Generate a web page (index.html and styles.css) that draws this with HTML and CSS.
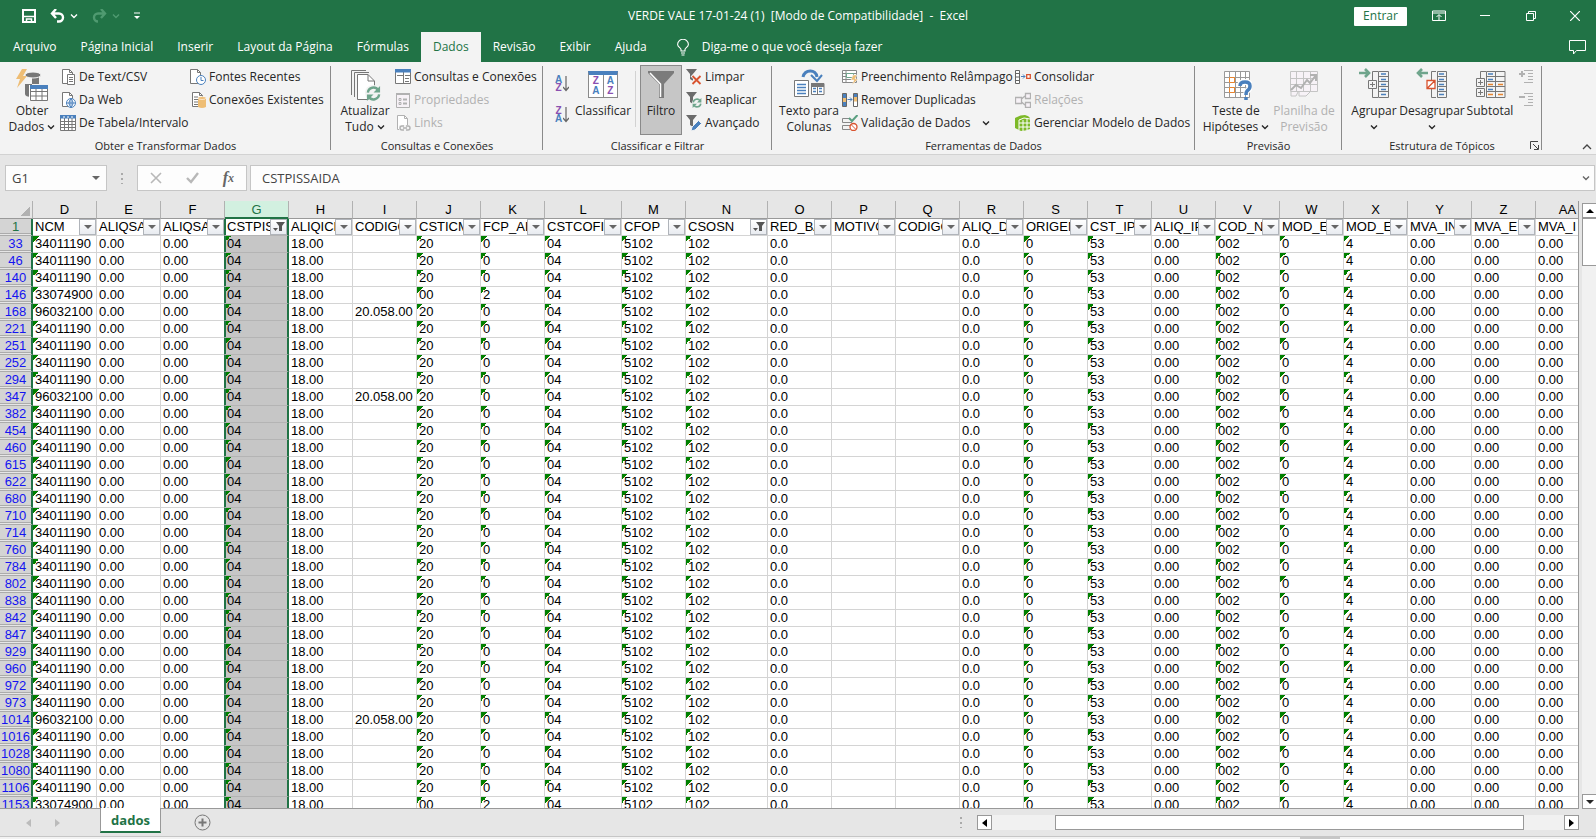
FILE: index.html
```html
<!DOCTYPE html>
<html lang="pt-BR">
<head>
  <meta charset="UTF-8">
  <meta name="viewport" content="width=device-width, initial-scale=1.0">
  <title>VERDE VALE 17-01-24 (1) - Excel</title>
  <link rel="stylesheet" href="styles.css">
</head>
<body>

  <!-- shared icons -->
  <svg class="defs" width="0" height="0">
    <symbol id="chev" viewBox="0 0 8 8"><path d="M1 2.5L4 5.5L7 2.5" fill="none" stroke="currentColor" stroke-width="1.4"/></symbol>
    <symbol id="down" viewBox="0 0 8 8"><path d="M0 2H8L4 6Z" fill="currentColor"/></symbol>
    <symbol id="page" viewBox="0 0 16 16"><path d="M2.500 .5H9.500L12.500 3.500V14.500H2.500Z" fill="#fff" stroke="currentColor"/><path d="M9.500 .5V3.500H12.500" fill="none" stroke="currentColor"/></symbol>
    <symbol id="funnel" viewBox="0 0 16 16"><path d="M0 0H11L7 5V12L4 10V5Z" fill="#6b6b6b"/></symbol>
    <symbol id="recycle" viewBox="0 0 16 16"><path d="M2 7A6 6 0 0 1 13 4.500M14 9A6 6 0 0 1 3 11.500" fill="none" stroke="#6fa58c" stroke-width="2.600"/><path d="M15 0V7H8ZM1 16V9H8Z" fill="#6fa58c"/></symbol>
  </svg>

  <header class="titlebar">
    <div class="quick">
      <button class="qbtn" aria-label="Salvar"><svg width="14" height="14" viewBox="0 0 14 14"><path d="M1 1H13V13H1Z" fill="none" stroke="#fff" stroke-width="2"/><path d="M1 7.500H13M4.500 13V10H9.500V13" fill="none" stroke="#fff" stroke-width="1.500"/></svg></button>
      <button class="qbtn undo" aria-label="Desfazer"><svg width="15" height="14" viewBox="0 0 15 14"><path d="M6 0L2 4.500L6 9M2 4.500H9A4 4 0 0 1 9 12.500H7" fill="none" stroke="currentColor" stroke-width="2.400"/></svg><svg width="8" height="8"><use href="#chev"/></svg></button>
      <button class="qbtn undo dim" aria-label="Refazer"><svg width="15" height="14" viewBox="0 0 15 14"><path d="M9 0L13 4.500L9 9M13 4.500H6A4 4 0 0 0 6 12.500H5" fill="none" stroke="currentColor" stroke-width="2.400"/></svg><svg width="8" height="8"><use href="#chev"/></svg></button>
      <button class="qbtn" aria-label="Personalizar"><svg width="6" height="8" viewBox="0 0 6 8"><path d="M0 1H6" stroke="#fff"/><path d="M0 4H6L3 7Z" fill="#fff"/></svg></button>
    </div>
    <h1 class="doc">VERDE VALE 17-01-24 (1)&nbsp; [Modo de Compatibilidade]&nbsp; -&nbsp; Excel</h1>
    <div class="window">
      <button class="signin">Entrar</button>
      <button class="wbtn" aria-label="Faixa de opções"><svg width="14" height="12" viewBox="0 0 14 12"><path d="M.5 1H13.500V10.500H.5ZM.5 3H13.500M7 10V5M4.500 7L7 4.500L9.500 7" fill="none" stroke="#fff"/></svg></button>
      <button class="wbtn" aria-label="Minimizar"><svg width="10" height="10" viewBox="0 0 10 10"><path d="M0 4.500H10" stroke="#fff"/></svg></button>
      <button class="wbtn" aria-label="Restaurar"><svg width="10" height="10" viewBox="0 0 10 10"><path d="M.5 2.500H7.500V9.500H.5ZM2.500 2.500V.5H9.500V7.500H7.500" fill="none" stroke="#fff"/></svg></button>
      <button class="wbtn" aria-label="Fechar"><svg width="10" height="10" viewBox="0 0 10 10"><path d="M0 0L10 10M10 0L0 10" stroke="#fff" stroke-width="1.200"/></svg></button>
    </div>
  </header>

  <nav class="tabs">
    <a href="#" class="tab">Arquivo</a>
    <a href="#" class="tab">Página Inicial</a>
    <a href="#" class="tab">Inserir</a>
    <a href="#" class="tab">Layout da Página</a>
    <a href="#" class="tab">Fórmulas</a>
    <a href="#" class="tab active">Dados</a>
    <a href="#" class="tab">Revisão</a>
    <a href="#" class="tab">Exibir</a>
    <a href="#" class="tab">Ajuda</a>
    <button class="tell"><svg width="12" height="17" viewBox="0 0 12 17"><path d="M4 12V10.500C4 9 .6 8 .6 5.500A5.200 5 0 0 1 11.400 5.500C11.400 8 8 9 8 10.500V12ZM4 14H8M4.500 16H7.500" fill="none" stroke="#fff" stroke-width="1.100"/></svg>Diga-me o que você deseja fazer</button>
    <button class="comment" aria-label="Comentários"><svg width="17" height="15" viewBox="0 0 17 15"><path d="M.5 .5H16.500V10.500H7.500L4.500 14V10.500H.5Z" fill="none" stroke="#fff"/></svg></button>
  </nav>

  <main class="ribbon">
    <section class="group">
      <div class="tools">
        <button class="big w52">
          <svg width="32" height="34" viewBox="0 0 32 34"><path d="M9 8V26Q9 29 16 29V8Z M9 7H23V16H9Z" fill="#777"/><ellipse cx="17" cy="7" rx="8" ry="3" fill="#777" stroke="#f3f3f3"/><path d="M6 1H11L7 8H11L1 20L4 11H0Z" fill="#eebd74"/><rect x="13" y="17" width="19" height="16" fill="#fff"/><path d="M14.500 18.500H31.500V32.500H14.500ZM14 23.500H32M14 28H32M20 19V32M26 19V32" fill="none" stroke="#777"/><path d="M14 17H32V21H14Z" fill="#4a80bd"/></svg>
          <span>Obter<br>Dados <svg width="8" height="8"><use href="#chev"/></svg></span>
        </button>
        <div class="col w128">
          <button class="small"><svg width="16" height="16" viewBox="0 0 16 16"><use href="#page"/><path d="M7.500 5.500H14.500V15.500H7.500Z" fill="#fff" stroke="#777"/><path d="M9 8.500H13M9 10.500H13M9 12.500H13" stroke="#777"/></svg>De Text/CSV</button>
          <button class="small"><svg width="16" height="16" viewBox="0 0 16 16"><use href="#page"/><circle cx="11" cy="11" r="4.500" fill="#fff" stroke="#4a80bd"/><path d="M6.500 11H15.500M11 6.500V15.500M11 6.500Q7 11 11 15.500Q15 11 11 6.500" fill="none" stroke="#4a80bd"/></svg>Da Web</button>
          <button class="small"><svg width="16" height="16" viewBox="0 0 16 16"><path d="M.5 .5H15.500V15.500H.5ZM0 6.500H16M0 9.500H16M0 12.500H16M4.500 3V16M8.500 3V16M12 3V16" fill="#fff" stroke="#777"/><path d="M0 0H16V3.500H0Z" fill="#4a80bd"/><path d="M3 2H5M7 2H9M11 2H13" stroke="#fff"/></svg>De Tabela/Intervalo</button>
        </div>
        <div class="col">
          <button class="small"><svg width="16" height="16" viewBox="0 0 16 16"><use href="#page" x="-2"/><circle cx="11" cy="11" r="4.500" fill="#fff" stroke="#4a80bd"/><path d="M11 8V11.500H13.500" fill="none" stroke="#4a80bd"/></svg>Fontes Recentes</button>
          <button class="small"><svg width="16" height="16" viewBox="0 0 16 16"><use href="#page"/><path d="M4 5H8M4 7.500H8M4 10H8M4 12.500H8" stroke="#777"/><path d="M8 5H16V15Q12 17 8 15Z" fill="#eebd74"/><ellipse cx="12" cy="6" rx="4" ry="1.500" fill="#eebd74" stroke="#fff" stroke-width=".6"/></svg>Conexões Existentes</button>
        </div>
      </div>
      <h2 class="caption">Obter e Transformar Dados</h2>
    </section>

    <section class="group">
      <div class="tools">
        <button class="big w56">
          <svg width="32" height="34" viewBox="0 0 32 34"><path d="M2.500 27V2.500H17M5.500 29V4.500H20" fill="none" stroke="#777"/><path d="M8.500 6.500H19L25.500 13V31.500H8.500Z" fill="#fff" stroke="#777"/><path d="M19 6.500V13H25" fill="none" stroke="#777"/><circle cx="24" cy="25" r="8" fill="#f3f3f3"/><use href="#recycle" x="17" y="18" width="15" height="15"/></svg>
          <span>Atualizar<br>Tudo <svg width="8" height="8"><use href="#chev"/></svg></span>
        </button>
        <div class="col">
          <button class="small"><svg width="16" height="16" viewBox="0 0 16 16"><path d="M.5 .5H15.500V14.500H.5ZM10 6.500H15M10 9.500H14M10 12.500H14M8.500 3V15M2 6.500H8" fill="#fff" stroke="#777"/><path d="M0 0H16V3.500H0Z" fill="#4a80bd"/></svg>Consultas e Conexões</button>
          <button class="small" disabled><svg width="16" height="16" viewBox="0 0 16 16"><path d="M1.500 1.500H14.500V15.500H1.500Z" fill="#f7f2f7" stroke="#b1b1b1"/><path d="M1 2H15M8 7.500H12M8 11.500H12" stroke="#b1b1b1" stroke-width="2"/><path d="M4 6.500H6V8.500H4ZM4 10.500H6V12.500H4Z" fill="none" stroke="#b1b1b1"/></svg>Propriedades</button>
          <button class="small" disabled><svg width="16" height="16" viewBox="0 0 16 16"><use href="#page"/><path d="M4 10H16V16H4Z" fill="#f3f3f3"/><path d="M9 11H7A2 2 0 0 0 7 15H9M11 11H13A2 2 0 0 1 13 15H11M8 13H12" fill="none" stroke="#b1b1b1" stroke-width="1.400"/></svg>Links</button>
        </div>
      </div>
      <h2 class="caption">Consultas e Conexões</h2>
    </section>

    <section class="group">
      <div class="tools">
        <div class="sorts">
          <button class="sort" aria-label="Classificar de A a Z"><span><b class="a">A</b><b class="z">Z</b></span><svg width="6" height="16" viewBox="0 0 6 16"><path d="M3 0V14M0 11L3 14.500L6 11" fill="none" stroke="#666" stroke-width="1.200"/></svg></button>
          <button class="sort" aria-label="Classificar de Z a A"><span><b class="z">Z</b><b class="a">A</b></span><svg width="6" height="16" viewBox="0 0 6 16"><path d="M3 0V14M0 11L3 14.500L6 11" fill="none" stroke="#666" stroke-width="1.200"/></svg></button>
        </div>
        <button class="big w60">
          <span class="azbox"><span><b class="z">Z</b><b class="a">A</b></span><span><b class="a">A</b><b class="z">Z</b></span></span>
          <span>Classificar</span>
        </button>
        <button class="big filter">
          <svg width="32" height="34" viewBox="0 0 32 34"><path d="M3 3H29V5L19 16V30H14V16L3 5Z" fill="#7b7b7b"/><path d="M5 5L15.500 16V29" fill="none" stroke="#fff" stroke-width="1.500"/></svg>
          <span>Filtro</span>
        </button>
        <div class="col">
          <button class="small"><svg width="16" height="16" viewBox="0 0 16 16"><use href="#funnel"/><path d="M6 6L15 15M15 6L6 15" stroke="#f3f3f3" stroke-width="4"/><path d="M6.500 7L14.500 15M14.500 7L6.500 15" stroke="#d9532f" stroke-width="1.800"/></svg>Limpar</button>
          <button class="small"><svg width="16" height="16" viewBox="0 0 16 16"><use href="#funnel"/><circle cx="11" cy="11" r="5" fill="#f3f3f3"/><use href="#recycle" x="6" y="6" width="10" height="10"/></svg>Reaplicar</button>
          <button class="small"><svg width="16" height="16" viewBox="0 0 16 16"><use href="#funnel"/><path d="M5 16L6 12L12.500 5.500L15.500 8.500L9 15Z" fill="#4a80bd" stroke="#f3f3f3"/></svg>Avançado</button>
        </div>
      </div>
      <h2 class="caption">Classificar e Filtrar</h2>
    </section>

    <section class="group">
      <div class="tools">
        <button class="big w62">
          <svg width="32" height="34" viewBox="0 0 32 34"><path d="M10 9C12 1 23 1 24 9" fill="none" stroke="#4a80bd" stroke-width="3"/><path d="M18 7L24 13L29 7" fill="none" stroke="#4a80bd" stroke-width="2"/><path d="M1.500 12.500H15.500V28.500H1.500ZM18.500 15.500H31V26.500H18.500ZM24.500 17V26M18 18.500H31" fill="#fff" stroke="#777"/><path d="M18 16.500H31" stroke="#777" stroke-width="3"/><path d="M4 16.500H13M4 19.500H13M4 22.500H13M4 25.500H13M20 20.500H23M20 23.500H23M26 20.500H29M26 23.500H29" stroke="#4a80bd" stroke-width="1.300"/></svg>
          <span>Texto para<br>Colunas</span>
        </button>
        <div class="col w171">
          <button class="small"><svg width="16" height="16" viewBox="0 0 16 16"><path d="M.5 1.500H14.500V13.500H.5ZM0 4.500H15M0 7.500H15M0 10.500H15M4 2V14" fill="#fff" stroke="#888"/><path d="M4.500 4.500H11.500V8.500H4.500Z" fill="#fff" stroke="#6fa58c"/><path d="M11 6H15L13 10H16L10 16L12 11H9Z" fill="#eebd74" stroke="#f3f3f3" stroke-width=".5"/></svg>Preenchimento Relâmpago</button>
          <button class="small"><svg width="16" height="16" viewBox="0 0 16 16"><path d="M.5 1.500H4.500V14.500H.5ZM11.500 1.500H15.500V14.500H11.500Z" fill="#eebd74" stroke="#666"/><path d="M1 2H4V6H1ZM1 10H4V14H1ZM12 2H15V5H12Z" fill="#4a80bd"/><path d="M12 9.500H15V14H12Z" fill="#fff"/><path d="M5.500 7.500H10M8 5.500L10 7.500L8 9.500" fill="none" stroke="#4a80bd"/></svg>Remover Duplicadas</button>
          <button class="small"><svg width="16" height="16" viewBox="0 0 16 16"><path d="M8 3.500H.5V7.500H10M8 10.500H.5V14.500H8" fill="none" stroke="#888"/><path d="M7 3L10 6L15.500 0" fill="none" stroke="#5a9f80" stroke-width="2"/><circle cx="11.500" cy="12" r="3.500" fill="#fff" stroke="#d9532f" stroke-width="1.300"/><path d="M9 9.500L14 14.500" stroke="#d9532f"/></svg>Validação de Dados <svg class="more" width="8" height="8"><use href="#chev"/></svg></button>
        </div>
        <div class="col">
          <button class="small"><svg width="16" height="16" viewBox="0 0 16 16"><path d="M.5 1.500H4.500V14.500H.5ZM0 4.500H5M0 8H5M0 11.500H5" fill="#fff" stroke="#666"/><path d="M6 7.500H10M8 5.500L10 7.500L8 9.500" fill="none" stroke="#4a80bd"/><path d="M11.700 5.700H15.300V9.300H11.700Z" fill="#fff" stroke="#d9532f" stroke-width="1.300"/></svg>Consolidar</button>
          <button class="small" disabled><svg width="16" height="16" viewBox="0 0 16 16"><path d="M.5 5.500H6.500V11.500H.5ZM10.500 1.500H15.500V6.500H10.500ZM10.500 10.500H15.500V15.500H10.500ZM6.500 7L10 4M6.500 10L10 13" fill="#f7f2f7" stroke="#b1b1b1" stroke-width="1.300"/></svg>Relações</button>
          <button class="small"><svg width="16" height="16" viewBox="0 0 16 16"><path d="M0 3Q5 0 10 0Q14 1 15 3V14Q10 16 6 16L0 13Z" fill="#7db928"/><path d="M4 15V5L9 3L15 4M4 8H15M4 12H15M8 5V16M12 4V15" fill="none" stroke="#fff"/></svg>Gerenciar Modelo de Dados</button>
        </div>
      </div>
      <h2 class="caption">Ferramentas de Dados</h2>
    </section>

    <section class="group">
      <div class="tools">
        <button class="big w70">
          <svg width="32" height="34" viewBox="0 0 32 34"><path d="M4.500 3.500H29.500V29.500H4.500ZM4 9.500H30M4 14.500H30M4 19.500H30M4 24.500H30M9.500 3V30M15.500 3V30M20.500 3V30M25.500 3V30" fill="#fff" stroke="#999"/><path d="M9.500 9.500H14.500V14.500H9.500ZM9.500 19.500H14.500V24.500H9.500Z" fill="#fff" stroke="#e8852f"/><path d="M20 18Q20 14 25 14Q30 14 30 18Q30 21 27 23Q26 24 26 27" fill="none" stroke="#fff" stroke-width="6"/><path d="M20 18Q20 14 25 14Q30 14 30 18Q30 21 27 23Q26 24 26 27M26 29V32" fill="none" stroke="#4a80bd" stroke-width="3.500"/></svg>
          <span>Teste de<br>Hipóteses <svg width="8" height="8"><use href="#chev"/></svg></span>
        </button>
        <button class="big w62" disabled>
          <svg width="32" height="34" viewBox="0 0 32 34"><path d="M2.500 3.500H29.500V23.500H2.500ZM2 10.500H30M2 16.500H30M8.500 3V24M15.500 3V24M22.500 3V24M3 24V28H8L10 24M11 24V28H18L22 24" fill="#f7f2f7" stroke="#c4c4c4"/><path d="M3 22L8 17L13 20L19 12L22 15L28 7M22 7H28V13" fill="none" stroke="#b1b1b1" stroke-width="2"/></svg>
          <span>Planilha de<br>Previsão</span>
        </button>
      </div>
      <h2 class="caption">Previsão</h2>
    </section>

    <section class="group">
      <div class="tools">
        <button class="big w52">
          <svg width="32" height="34" viewBox="0 0 32 34"><path d="M1 5H10M7 1L11 5L7 9" fill="none" stroke="#6fa58c" stroke-width="2.600"/><path d="M20 3.500H14.500V12M14.500 21V29.500H20M20.500 3.500H30.500V29.500H20.500ZM20 8.500H31M20 13.500H31M20 18.500H31M20 23.500H31M10.500 12.500H18.500V20.500H10.500ZM12 16.500H17M14.500 14V19" fill="none" stroke="#777"/><path d="M23 6H28M23 11.500H28M23 16.500H28M23 21.500H28M23 26.500H28" stroke="#4a80bd" stroke-width="1.500"/></svg>
          <span>Agrupar<br><svg width="8" height="8"><use href="#chev"/></svg></span>
        </button>
        <button class="big w60">
          <svg width="32" height="34" viewBox="0 0 32 34"><path d="M2 5H12M6 1L2 5L6 9" fill="none" stroke="#6fa58c" stroke-width="2.600"/><path d="M20 3.500H15.500V12M15.500 21V29.500H20M21.500 3.500H30.500V29.500H21.500ZM21 8.500H31M21 13.500H31M21 18.500H31M21 23.500H31" fill="none" stroke="#777"/><path d="M23 6H28M23 11.500H28M23 16.500H28M23 21.500H28M23 26.500H28" stroke="#4a80bd" stroke-width="1.500"/><path d="M11 12.500H19V20.500H11ZM11 20.500L19 12.500" fill="#fff" stroke="#d9532f" stroke-width="1.300"/></svg>
          <span>Desagrupar<br><svg width="8" height="8"><use href="#chev"/></svg></span>
        </button>
        <button class="big w52">
          <svg width="32" height="34" viewBox="0 0 32 34"><path d="M12 3.500H6.500V10M12.500 3.500H31V29.500H12.500ZM12 8.500H31M12 13.500H31M12 18.500H31M12 23.500H31M21.500 3V30M2.500 10.500H10.500V18.500H2.500ZM2.500 20.500H10.500V28.500H2.500ZM4 14.500H9M6.500 12V17M4 24.500H9M6.500 22V27" fill="none" stroke="#777"/><path d="M14 6H19M14 11.500H19M14 21.500H19" stroke="#4a80bd" stroke-width="1.500"/><path d="M14 16.500H19M24 16.500H29M14 26.500H19M24 26.500H29" stroke="#e8852f" stroke-width="1.500"/></svg>
          <span>Subtotal</span>
        </button>
        <div class="col">
          <button class="small" disabled aria-label="Mostrar detalhe"><svg width="16" height="16" viewBox="0 0 16 16"><path d="M1 5H7M4 2V8" stroke="#b1b1b1" stroke-width="2"/><path d="M6 1.500H15M10 4.500H15M10 7.500H15M10 10.500H15M6 13.500H15" stroke="#b1b1b1"/></svg></button>
          <button class="small" disabled aria-label="Ocultar detalhe"><svg width="16" height="16" viewBox="0 0 16 16"><path d="M1 5H7" stroke="#b1b1b1" stroke-width="2"/><path d="M6 1.500H15M10 4.500H15M10 7.500H15M10 10.500H15M6 13.500H15" stroke="#b1b1b1"/></svg></button>
        </div>
      </div>
      <h2 class="caption">Estrutura de Tópicos</h2>
      <button class="launcher" aria-label="Configurações"><svg width="9" height="9" viewBox="0 0 9 9"><path d="M8 .5H.5V8M3 3L8 8M8.500 4V8.500H4" fill="none" stroke="#444"/></svg></button>
    </section>
    <button class="collapse" aria-label="Recolher"><svg width="10" height="6" viewBox="0 0 10 6"><path d="M1 5L5 1L9 5" fill="none" stroke="#444" stroke-width="1.300"/></svg></button>
  </main>

  <div class="formulabar">
    <div class="box namebox"><input type="text" value="G1" aria-label="Caixa de nome"><svg width="8" height="8"><use href="#down"/></svg></div>
    <span class="dots"></span>
    <div class="box fxbox">
      <button aria-label="Cancelar"><svg width="12" height="12" viewBox="0 0 12 12"><path d="M1 1L11 11M11 1L1 11" stroke="#b8b8b8" stroke-width="1.600"/></svg></button>
      <button aria-label="Inserir"><svg width="13" height="12" viewBox="0 0 13 12"><path d="M1 6L5 10L12 1" fill="none" stroke="#b8b8b8" stroke-width="2.400"/></svg></button>
      <button class="fx" aria-label="Inserir função">f<sub>x</sub></button>
    </div>
    <div class="box formula"><input type="text" value="CSTPISSAIDA" aria-label="Barra de fórmulas"><svg width="8" height="8"><use href="#chev"/></svg></div>
  </div>

  <div class="workspace">
    <div class="sheet">
      <table class="grid" id="grid"></table>
    </div>
    <div class="vscroll">
      <button aria-label="Rolar para cima"><svg width="8" height="8" viewBox="0 0 8 8"><path d="M0 6H8L4 2Z"/></svg></button>
      <div class="track"><div class="thumb"></div></div>
      <button aria-label="Rolar para baixo"><svg width="8" height="8"><use href="#down"/></svg></button>
    </div>
  </div>

  <footer class="bottom">
    <button class="step" aria-label="Anterior"><svg width="5" height="8" viewBox="0 0 5 8"><path d="M5 0V8L0 4Z" fill="#bbb"/></svg></button>
    <button class="step" aria-label="Próxima"><svg width="5" height="8" viewBox="0 0 5 8"><path d="M0 0V8L5 4Z" fill="#bbb"/></svg></button>
    <a href="#" class="sheettab">dados</a>
    <button class="add" aria-label="Nova planilha"><svg width="17" height="17" viewBox="0 0 17 17"><circle cx="8.500" cy="8.500" r="7.500" fill="none" stroke="#777"/><path d="M4.500 8.500H12.500M8.500 4.500V12.500" stroke="#777" stroke-width="2"/></svg></button>
    <span class="dots"></span>
    <div class="hscroll">
      <button aria-label="Rolar para a esquerda"><svg width="5" height="8" viewBox="0 0 5 8"><path d="M5 0V8L0 4Z"/></svg></button>
      <div class="track"><div class="thumb"></div></div>
      <button aria-label="Rolar para a direita"><svg width="5" height="8" viewBox="0 0 5 8"><path d="M0 0V8L5 4Z"/></svg></button>
    </div>
  </footer>
  <div class="status"><span></span></div>

  <script src="script.js"></script>
</body>
</html>
```
FILE: styles.css
```css
* {
  box-sizing: border-box;
}

body {
  margin: 0;
  height: 100vh;
  display: flex;
  flex-direction: column;
  overflow: hidden;
  background-color: #e6e6e6;
  color: #262626;
  font-family: "Open Sans", "Noto Sans", sans-serif;
  font-size: 12px;
  line-height: 16px;
}

button {
  border: 0;
  padding: 0;
  background: none;
  font: inherit;
  color: inherit;
}

a {
  color: inherit;
  text-decoration: none;
}

h1, h2 {
  margin: 0;
  font-size: 12px;
  font-weight: normal;
}

svg {
  flex: none;
}

.defs {
  position: absolute;
}

/* title bar */

.titlebar {
  display: grid;
  grid-template-columns: 1fr auto 1fr;
  align-items: center;
  height: 32px;
  background-color: #217346;
  color: white;
}

.quick {
  display: flex;
  align-items: center;
  gap: 14px;
  padding-left: 22px;
}

.qbtn {
  display: flex;
  align-items: center;
}

.undo {
  gap: 5px;
}

.dim {
  color: #4f9a70;
}

.window {
  display: flex;
  justify-content: flex-end;
  align-items: center;
  height: 28px;
}

.signin {
  width: 53px;
  height: 19px;
  margin-right: 9px;
  border-radius: 1px;
  background-color: white;
  color: #217346;
}

.wbtn {
  display: flex;
  justify-content: center;
  width: 46px;
}

.window .wbtn:last-child {
  width: 42px;
}

/* ribbon tabs */

.tabs {
  display: flex;
  height: 30px;
  padding-left: 1px;
  background-color: #217346;
  color: white;
  line-height: 30px;
}

.tab {
  padding: 0 12px;
}

.tab.active {
  background-color: #f3f3f3;
  color: #217346;
}

.tell {
  display: flex;
  align-items: center;
  gap: 13px;
  margin-left: 18px;
}

.comment {
  display: flex;
  align-items: center;
  margin-left: auto;
  padding-right: 10px;
}

/* ribbon */

.ribbon {
  display: flex;
  height: 93px;
  background-color: #f3f3f3;
  border-bottom: 1px solid #d2d2d2;
}

.group {
  position: relative;
  display: flex;
  flex-direction: column;
  flex: none;
  padding-left: 6px;
}

.group::after {
  content: "";
  position: absolute;
  right: 0;
  top: 4px;
  bottom: 4px;
  width: 1px;
  background-color: #8a8a8a;
}

.group:nth-child(1) { width: 331px; }
.group:nth-child(2) { width: 212px; }
.group:nth-child(3) { width: 229px; }
.group:nth-child(4) { width: 423px; }
.group:nth-child(5) { width: 147px; }
.group:nth-child(6) { width: 200px; }

.tools {
  display: flex;
  gap: 2px;
  height: 76px;
  padding-top: 3px;
}

.caption {
  margin-left: -6px;
  text-align: center;
  font-size: 11px;
  line-height: 15px;
}

.big {
  display: flex;
  flex-direction: column;
  align-items: center;
  flex: none;
  gap: 1px;
  height: 70px;
  padding-top: 3px;
  white-space: nowrap;
}

.w52 { width: 52px; }
.w56 { width: 56px; }
.w60 { width: 60px; }
.w62 { width: 62px; }
.w70 { width: 70px; }
.w128 { width: 128px; }
.w171 { width: 171px; }

.filter {
  position: relative;
  width: 42px;
  margin: 0 2px 0 5px;
  border: 1px solid #8a8a8a;
  background-color: #c6c6c6;
  padding-top: 2px;
}

/* thin rule between sort and filter */
.filter::before {
  content: "";
  position: absolute;
  left: -6px;
  top: 5px;
  width: 1px;
  height: 56px;
  background-color: #d2d2d2;
}

.col {
  display: flex;
  flex-direction: column;
  flex: none;
}

.small {
  display: flex;
  align-items: center;
  gap: 3px;
  height: 23px;
  white-space: nowrap;
  color: #262626;
}

.small > svg {
  color: #777;
}

.small .more {
  margin-left: 8px;
  color: #262626;
}

button:disabled,
button:disabled > svg {
  color: #b1b1b1;
}

.sorts {
  width: 22px;
  padding: 3px 0 0 6px;
}

.sort {
  display: flex;
  align-items: center;
  gap: 1px;
  height: 31px;
}

.sort span,
.azbox span {
  display: flex;
  flex-direction: column;
  font: 10px/8px "Liberation Sans", sans-serif;
}

.a { color: #4a80bd; }
.z { color: #8a50b0; }

.azbox {
  display: flex;
  width: 30px;
  height: 27px;
  margin: 3px 0 4px;
  border: 1px solid #8a8a8a;
  border-top: 4px solid #4a80bd;
  background-color: white;
}

.azbox span {
  flex: 1;
  align-items: center;
  justify-content: center;
  line-height: 10px;
}

.azbox span + span {
  border-left: 1px solid #8a8a8a;
}

.launcher {
  position: absolute;
  right: 3px;
  bottom: 4px;
  display: flex;
}

.collapse {
  display: flex;
  align-items: flex-end;
  margin-left: auto;
  padding: 0 4px 4px 0;
}

/* formula bar */

.formulabar {
  display: flex;
  align-items: flex-start;
  flex: none;
  height: 46px;
  padding: 10px 1px 0 5px;
}

.box {
  display: flex;
  align-items: center;
  height: 26px;
  border: 1px solid #c6c6c6;
  background-color: #fdfdfd;
  color: #666;
}

.box input {
  flex: 1;
  min-width: 0;
  border: 0;
  padding: 0;
  background: none;
  color: #444;
  font: 13px "Open Sans", sans-serif;
}

.namebox {
  width: 102px;
  padding: 0 6px;
}

.dots {
  width: 2px;
  height: 11px;
  background: repeating-linear-gradient(#aaa 0 2px, transparent 2px 5px);
}

.formulabar .dots {
  margin: 8px 14px 0;
}

.fxbox {
  justify-content: space-around;
  width: 110px;
  margin-right: 3px;
}

.fxbox button {
  display: flex;
}

.fx {
  font: italic bold 16px/16px "Liberation Serif", serif;
}

.fx sub {
  font-size: 12px;
}

.formula {
  flex: 1;
  padding: 0 4px 0 11px;
}

/* worksheet */

.workspace {
  display: flex;
  flex: 1;
  min-height: 0;
}

.sheet {
  flex: 1;
  min-width: 0;
  overflow: hidden;
  border-right: 1px solid #999;
  border-bottom: 1px solid #999;
}

.grid {
  table-layout: fixed;
  width: 0;
  border-collapse: separate;
  border-spacing: 0;
  font: 13px/16px "Liberation Sans", Arial, sans-serif;
  color: #000;
}

.grid th,
.grid td {
  height: 17px;
  padding: 0;
  overflow: hidden;
  white-space: nowrap;
  font-weight: normal;
}

.grid td {
  position: relative;
  padding-left: 2px;
  border-right: 1px solid #d4d4d4;
  border-bottom: 1px solid #d4d4d4;
  background-color: white;
}

.grid thead th {
  height: 18px;
  padding-top: 1px;
  border-right: 1px solid #b1b1b1;
  border-bottom: 1px solid #999;
  background-color: #e6e6e6;
}

.grid thead th.selected {
  border-bottom-color: #217346;
  box-shadow: inset 0 -1px #217346;
  background-color: #d2f0e0;
  color: #217346;
}

.grid .corner {
  background: linear-gradient(135deg, transparent 50%, #b1b1b1 50%) 20px 5px / 10px 10px no-repeat;
}

.grid tbody th {
  border-right: 2px solid #217346;
  border-bottom: 1px solid #ababab;
  box-shadow: inset 0 -1px #e6e6e6, inset 0 -2px #ababab;
  background-color: #d4d4d4;
  color: #1414f0;
}

.grid tbody .first th {
  color: #217346;
}

.grid td.mark {
  background-image: linear-gradient(135deg, #008000 50%, transparent 50%);
  background-size: 6px 6px;
  background-repeat: no-repeat;
}

.grid td.selected {
  border-right: 2px solid #217346;
  border-bottom-color: #b4b4b4;
  box-shadow: inset 1px 0 #217346;
  background-color: #c6c6c6;
}

.grid .first td.selected {
  background-color: white;
}

.grid td.before {
  border-right-color: #217346;
}

.title {
  display: block;
  margin-right: 16px;
  overflow: hidden;
}

.drop {
  position: absolute;
  right: 0;
  top: 0;
  display: flex;
  align-items: center;
  justify-content: center;
  width: 17px;
  height: 16px;
  border: 1px solid #b0b4ba;
  background: linear-gradient(#fff, #e8ebf0);
  color: #666;
}

.vscroll {
  display: flex;
  flex-direction: column;
  width: 14px;
  margin: 2px 0 0 3px;
}

.vscroll button,
.hscroll button {
  display: flex;
  align-items: center;
  justify-content: center;
  flex: none;
  width: 15px;
  height: 15px;
  border: 1px solid #999;
  background-color: white;
}

.track {
  flex: 1;
  background-color: #f1f1f1;
}

.thumb {
  border: 1px solid #999;
  background-color: white;
}

.vscroll .thumb {
  width: 15px;
  height: 48px;
}

/* sheet tabs */

.bottom {
  display: flex;
  align-items: center;
  flex: none;
  height: 27px;
  padding: 0 17px 0 26px;
}

.step {
  width: 29px;
  text-align: left;
}

.sheettab {
  align-self: flex-start;
  width: 61px;
  height: 25px;
  margin: -1px 33px 0 16px;
  border: solid #999;
  border-width: 0 1px;
  border-bottom: 2px solid #217346;
  background-color: white;
  color: #217346;
  font-size: 13px;
  font-weight: bold;
  line-height: 25px;
  text-align: center;
}

.add {
  display: flex;
}

.bottom .dots {
  margin: 0 15px 0 auto;
}

.hscroll {
  display: flex;
  flex: 0 1 602px;
}

.hscroll .thumb {
  width: 82%;
  height: 15px;
  margin-left: 11%;
}

.status {
  flex: none;
  height: 3px;
  border-top: 1px solid #c6c6c6;
  background-color: #f3f3f3;
}

.status span {
  display: block;
  width: 40px;
  height: 2px;
  margin-left: auto;
  margin-right: 256px;
  background-color: #c6c6c6;
}
```
FILE: script.js
```js
// letter, width, title, value, green error mark
const columns = [
  ['D', 64, 'NCM', '34011190', true],
  ['E', 64, 'ALIQSA', '0.00', false],
  ['F', 64, 'ALIQSA', '0.00', false],
  ['G', 64, 'CSTPIS', '04', true],
  ['H', 64, 'ALIQICM', '18.00', false],
  ['I', 64, 'CODIGO', '', false],
  ['J', 64, 'CSTICM', '20', true],
  ['K', 64, 'FCP_AL', '0', true],
  ['L', 77, 'CSTCOFIN', '04', true],
  ['M', 64, 'CFOP', '5102', true],
  ['N', 82, 'CSOSN', '102', true],
  ['O', 64, 'RED_BA', '0.0', false],
  ['P', 64, 'MOTIVO', '', false],
  ['Q', 64, 'CODIGO', '', false],
  ['R', 64, 'ALIQ_D', '0.0', false],
  ['S', 64, 'ORIGEM', '0', true],
  ['T', 64, 'CST_IP', '53', true],
  ['U', 64, 'ALIQ_IP', '0.00', false],
  ['V', 64, 'COD_N', '002', true],
  ['W', 64, 'MOD_E', '0', true],
  ['X', 64, 'MOD_E', '4', true],
  ['Y', 64, 'MVA_IN', '0.00', false],
  ['Z', 64, 'MVA_E', '0.00', false],
  ['AA', 64, 'MVA_I', '0.00', false]
];

const rows = [33, 46, 140, 146, 168, 221, 251, 252, 294, 347, 382, 454, 460, 615, 622, 680, 710,
  714, 760, 784, 802, 838, 842, 847, 929, 960, 972, 973, 1014, 1016, 1028, 1080, 1106, 1153];

// rows that differ from the common values
const brush = { D: '96032100', I: '20.058.00' };
const paste = { D: '33074900', J: '00', K: '2' };
const special = { 146: paste, 168: brush, 347: brush, 1014: brush, 1153: paste };

const arrow = '<svg width="8" height="8"><use href="#down"/></svg>';
const filtered = '<svg width="12" height="10" viewBox="0 0 12 10"><path d="M3 0H12L9 4V9H6V4ZM0 6H5L2.500 9Z" fill="#555"/></svg>';

function cellClass(letter, mark) {
  let name = mark ? 'mark' : '';
  if (letter === 'G') name += ' selected';
  if (letter === 'F') name += ' before';
  return name;
}

let html = '<colgroup><col style="width:33px">';
columns.forEach(c => { html += `<col style="width:${c[1]}px">`; });
html += '</colgroup><thead><tr><th class="corner"></th>';
columns.forEach(c => { html += `<th class="${c[0] === 'G' ? 'selected' : ''}">${c[0]}</th>`; });
html += '</tr></thead><tbody><tr class="first"><th>1</th>';

columns.forEach(c => {
  const icon = c[0] === 'G' || c[0] === 'N' ? filtered : arrow;
  html += `<td class="${cellClass(c[0], false)}"><span class="title">${c[2]}</span><button class="drop" aria-label="Filtrar">${icon}</button></td>`;
});
html += '</tr>';

rows.forEach(row => {
  const other = special[row] || {};
  html += `<tr><th>${row}</th>`;
  columns.forEach(c => {
    html += `<td class="${cellClass(c[0], c[4])}">${other[c[0]] || c[3]}</td>`;
  });
  html += '</tr>';
});

document.getElementById('grid').innerHTML = html + '</tbody>';
```
